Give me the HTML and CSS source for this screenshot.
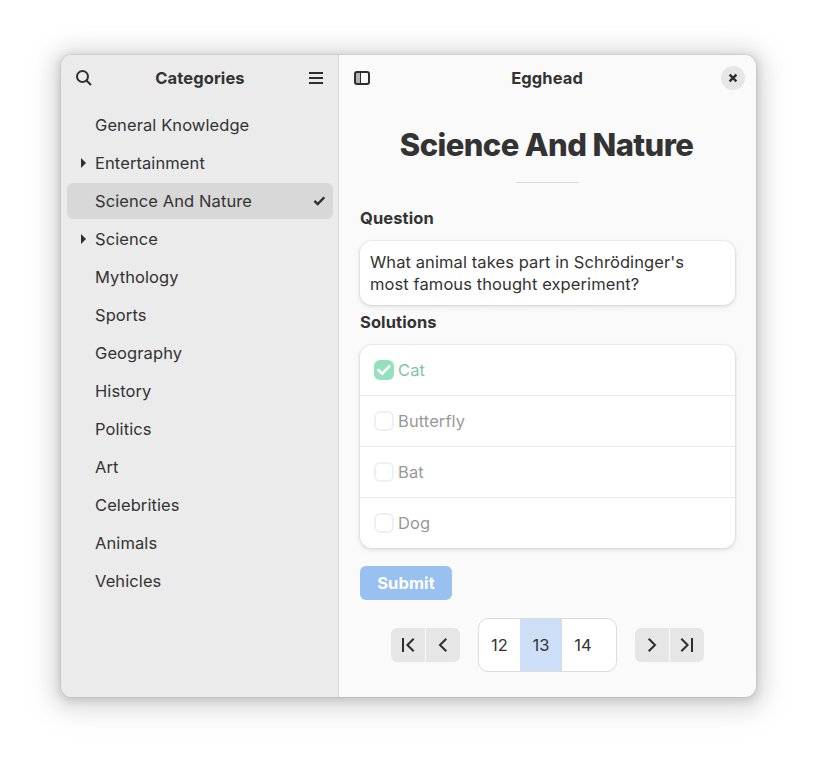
FILE: index.html
```html
<!DOCTYPE html>
<html lang="en">
<head>
<meta charset="utf-8">
<title>Egghead</title>
<link rel="stylesheet" href="styles.css">
</head>
<body>
<div class="window">
  <aside class="sidebar">
    <header class="headerbar">
      <button class="flat" aria-label="Search"><svg width="16" height="16" viewBox="0 0 16 16"><circle cx="6.5" cy="6.5" r="5.5"/><path d="M10.5 10.5 15 15"/></svg></button>
      <h2 class="title">Categories</h2>
      <button class="flat" aria-label="Menu"><svg width="16" height="16" viewBox="0 0 16 16"><path d="M1 3h14M1 8h14M1 13h14"/></svg></button>
    </header>
    <ul class="categories">
      <li>General Knowledge</li>
      <li><svg class="arrow" width="5" height="10" viewBox="0 0 5 10"><path d="M0 0 5 5 0 10z"/></svg>Entertainment</li>
      <li class="selected">Science And Nature<svg class="tick" width="12" height="10" viewBox="0 0 12 10"><path d="M1.4 4.8 4.7 8 11.3 1.3"/></svg></li>
      <li><svg class="arrow" width="5" height="10" viewBox="0 0 5 10"><path d="M0 0 5 5 0 10z"/></svg>Science</li>
      <li>Mythology</li>
      <li>Sports</li>
      <li>Geography</li>
      <li>History</li>
      <li>Politics</li>
      <li>Art</li>
      <li>Celebrities</li>
      <li>Animals</li>
      <li>Vehicles</li>
    </ul>
  </aside>
  <main class="content">
    <header class="headerbar">
      <button class="flat" aria-label="Toggle sidebar"><svg width="16" height="16" viewBox="0 0 16 16"><path class="pane" d="M2 3h4v10H2z"/><path class="thin" d="M6.5 2v12"/><rect x="1" y="2" width="14" height="12" rx="2"/></svg></button>
      <h2 class="title">Egghead</h2>
      <button class="close" aria-label="Close"><svg width="10" height="10" viewBox="0 0 10 10"><path d="M1.6 1.6 8.4 8.4M8.4 1.6 1.6 8.4"/></svg></button>
    </header>
    <div class="body">
      <h1>Science And Nature</h1>
      <hr>
      <h3>Question</h3>
      <p class="card question">What animal takes part in Schrödinger's<br>most famous thought experiment?</p>
      <h3 class="solutions-title">Solutions</h3>
      <ul class="card solutions">
        <li class="correct"><span class="check"><svg width="14" height="12" viewBox="0 0 14 12"><path d="M1.5 6 5.2 9.7 12.3 2.3"/></svg></span>Cat</li>
        <li><span class="check"></span>Butterfly</li>
        <li><span class="check"></span>Bat</li>
        <li><span class="check"></span>Dog</li>
      </ul>
      <button class="submit">Submit</button>
      <nav class="pager">
        <div class="linked">
          <button aria-label="First"><svg width="16" height="16" viewBox="0 0 16 16"><path d="M3 1v14M13.7 1.7 7.4 8l6.3 6.3"/></svg></button>
          <button aria-label="Previous"><svg width="16" height="16" viewBox="0 0 16 16"><path d="M11.3 1.7 5 8l6.3 6.3"/></svg></button>
        </div>
        <div class="pages"><span>12</span><span class="current">13</span><span>14</span></div>
        <div class="linked">
          <button aria-label="Next"><svg width="16" height="16" viewBox="0 0 16 16"><path d="M4.7 1.7 11 8l-6.3 6.3"/></svg></button>
          <button aria-label="Last"><svg width="16" height="16" viewBox="0 0 16 16"><path d="M13 1v14M2.3 1.7 8.6 8l-6.3 6.3"/></svg></button>
        </div>
      </nav>
    </div>
  </main>
</div>
</body>
</html>
```
FILE: styles.css
```css
* { box-sizing: border-box; margin: 0; padding: 0; }
body {
  min-height: 100vh;
  padding: 55px 0 0 61px;
  background: #fff;
  color: #333;
  font: 16.5px/22px Inter, "Liberation Sans", sans-serif;
  letter-spacing: .09px;
}
ul { list-style: none; }
button { border: 0; background: none; font: inherit; letter-spacing: inherit; color: inherit; display: flex; align-items: center; justify-content: center; }
svg { display: block; fill: none; stroke: #2e2e2e; stroke-width: 2; }
.window {
  display: flex;
  width: 695px;
  height: 642px;
  border-radius: 11px;
  overflow: hidden;
  background: #fafafa;
  box-shadow: 0 2px 8px 2px rgba(0,0,0,.13), 0 3px 20px 10px rgba(0,0,0,.09), 0 6px 32px 16px rgba(0,0,0,.04), 0 0 0 1px rgba(0,0,0,.05);
}
.sidebar { width: 278px; background: #ebebeb; border-right: 1px solid #d9d9d9; }
.sidebar .headerbar { padding-right: 5px; }
.content { flex: 1; }
.headerbar { display: flex; align-items: center; justify-content: space-between; height: 46px; padding: 0 6px; }
.flat { width: 34px; height: 34px; }
.title { font-size: 16.5px; font-weight: 700; }
.content .title { margin-right: 1px; }
.close { width: 24px; height: 24px; border-radius: 50%; background: #e6e6e6; margin: 0 5px; }
.close svg { stroke-width: 2.4; }
.categories { display: flex; flex-direction: column; gap: 2px; padding: 6px 5px 0 6px; }
.categories li { position: relative; display: flex; align-items: center; justify-content: space-between; height: 36px; padding: 0 8px 0 28px; border-radius: 6px; }
.categories .selected { background: #d8d8d8; }
.tick { stroke-width: 2.4; }
.arrow { position: absolute; left: 14px; top: 13px; fill: #2e2e2e; stroke: none; }
.pane { fill: #b5b5b5; stroke: none; }
.thin { stroke-width: 1; }
.body { padding: 26px 21px 0; }
h1 { margin-right: 2px; font-size: 31px; line-height: 36px; font-weight: 800; letter-spacing: -.6px; text-align: center; }
hr { width: 63px; height: 1px; border: 0; background: #dadada; margin: 19px auto 24px 156px; }
h3 { font-size: 16.5px; line-height: 22px; font-weight: 700; }
.card { background: #fff; border-radius: 12px; box-shadow: 0 0 0 1px rgba(0,0,0,.03), 0 1px 3px 1px rgba(0,0,0,.07), 0 2px 6px 2px rgba(0,0,0,.03); }
.question { margin-top: 12px; padding: 10px; height: 64px; }
.solutions-title { margin-top: 6px; }
.solutions { margin-top: 12px; }
.solutions li { display: flex; align-items: center; gap: 4px; height: 51px; padding-left: 14px; color: #999; border-bottom: 1px solid #ebebeb; }
.solutions li:last-child { border-bottom: 0; height: 50px; }
.solutions .correct { color: #83c3a4; }
.check { width: 20px; height: 20px; border: 2px solid #f0f0f0; border-radius: 6px; display: flex; align-items: center; justify-content: center; }
.correct .check { background: #95e0bf; border: 0; }
.check svg { stroke: #fff; stroke-width: 2.6; stroke-linecap: round; }
.submit { width: 92px; height: 34px; margin-top: 18px; border-radius: 6px; background: #98c0f1; color: #fff; font-weight: 700; }
.pager { display: flex; align-items: center; gap: 18px; margin: 18px 0 0 31px; }
.linked { display: flex; gap: 1px; border-radius: 6px; overflow: hidden; }
.linked button { width: 34px; height: 34px; background: #e6e6e6; }
.pages { display: flex; width: 139px; height: 54px; background: #fff; border: 1px solid #dbdbdb; border-radius: 10px; overflow: hidden; }
.pages span { width: 41px; display: flex; align-items: center; justify-content: center; }
.pages .current { width: 42px; background: #cddff7; }
.pages span:last-child { width: 42px; }
```
